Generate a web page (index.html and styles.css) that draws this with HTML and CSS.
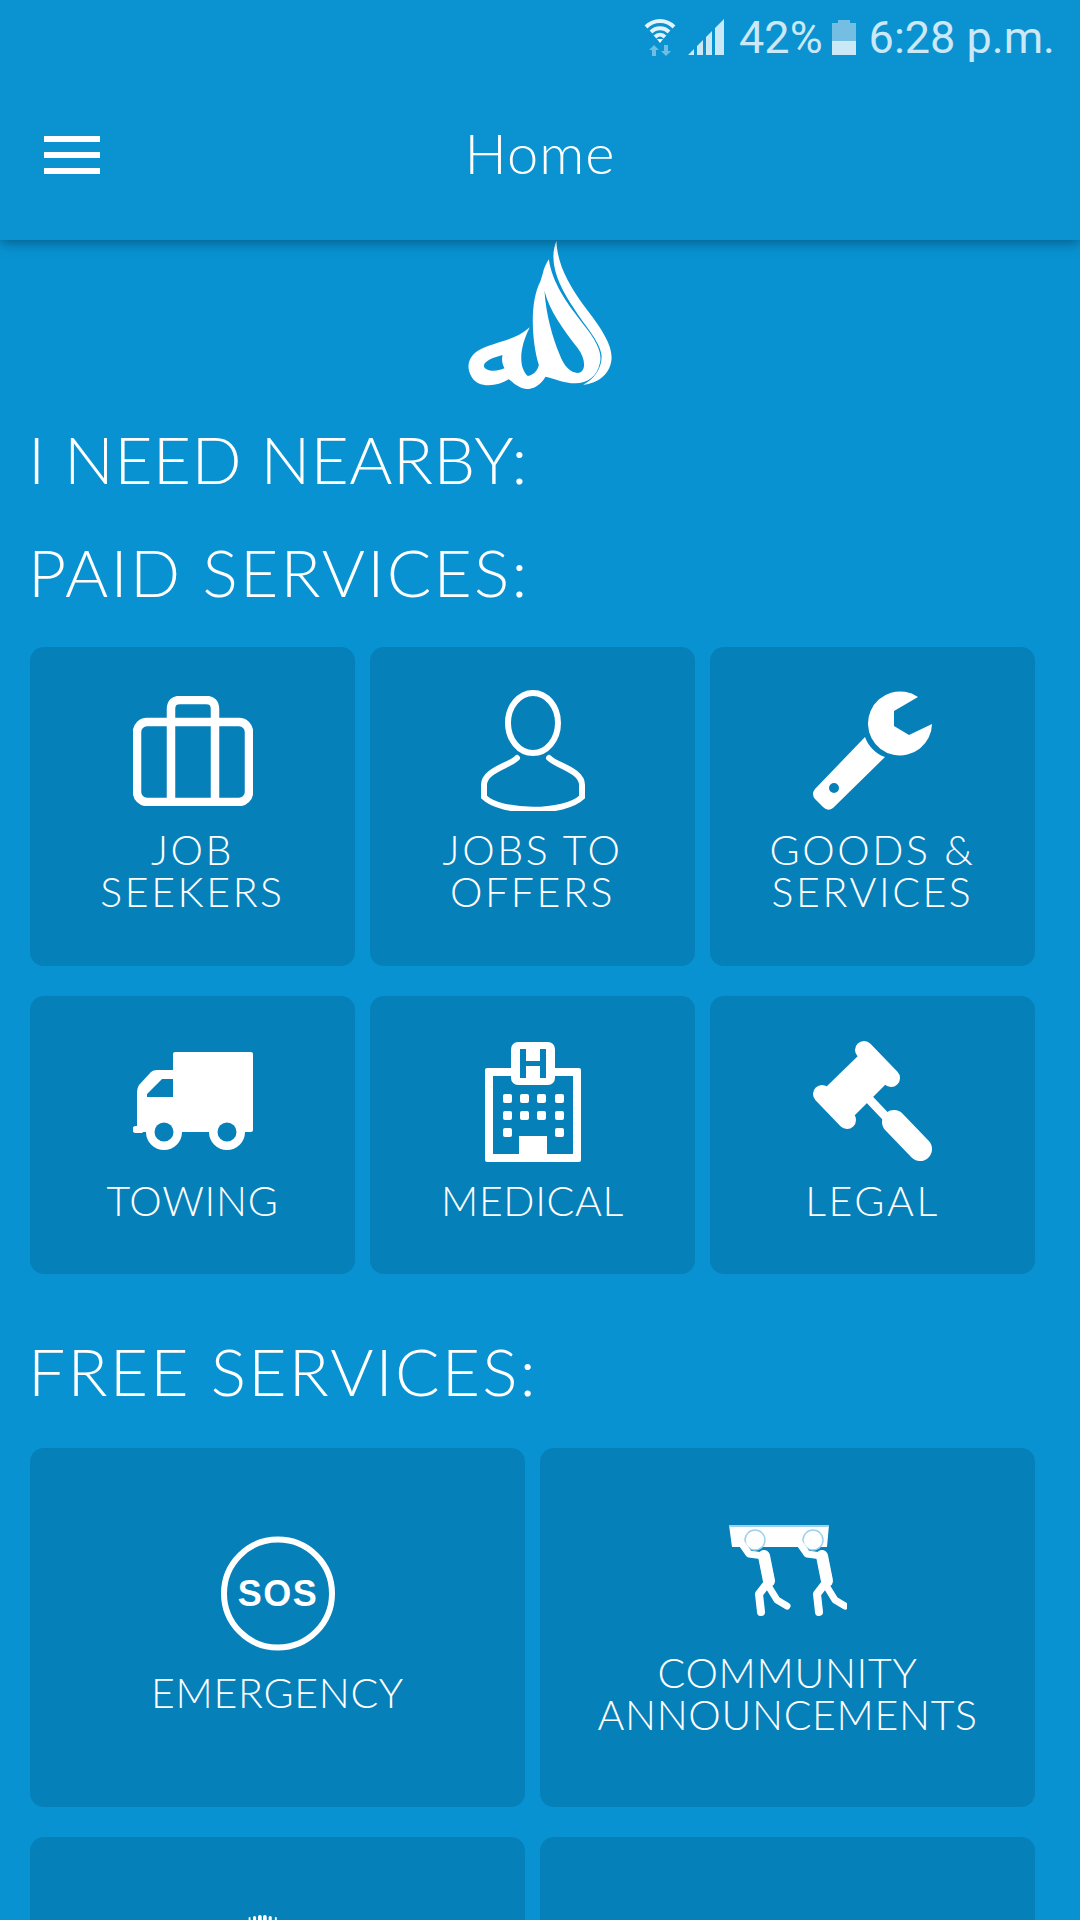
FILE: index.html
```html
<!DOCTYPE html>
<html>

<head>
    <meta charset="UTF-8">
    <title>Home</title>
    <meta name="viewport" content="width=device-width, initial-scale=1.0">
    <link rel="stylesheet" href="styles.css">
</head>

<body>
    <header class="app-bar">
        <div class="status-bar">
            <svg class="wifi-icon" width="32" height="37" viewBox="0 0 32 37">
                <path d="M2 8 C10 0 22 0 30 8" class="wifi-arc" />
                <path d="M7 13 C12 8 20 8 25 13" class="wifi-arc" />
                <path d="M11 18 C14 15 18 15 21 18" class="wifi-arc" />
                <path d="M13 20 L19 20 L16 24 Z" fill="#fff" />
                <path d="M8 37 V31 H5 L10 26 L15 31 H12 V37 Z M24 26 V32 H27 L22 37 L17 32 H20 V26 Z" class="wifi-data" />
            </svg>
            <svg class="signal-icon" width="36" height="36" viewBox="0 0 36 36">
                <path d="M0 36 L6 30 V36 Z M9 36 V27 L15 21 V36 Z M18 36 V18 L24 12 V36 Z M27 36 V9 L36 0 V36 Z" />
            </svg>
            <span class="battery-text">42%</span>
            <div class="battery-icon">
                <div class="battery-cap"></div>
                <div class="battery-body">
                    <div class="battery-level"></div>
                </div>
            </div>
            <span class="clock-text">6:28 p.m.</span>
        </div>
        <div class="title-row">
            <div class="menu-button">
                <span></span>
                <span></span>
                <span></span>
            </div>
            <h1>Home</h1>
        </div>
    </header>

    <div class="logo-row">
        <svg width="147" height="150" viewBox="200 60 440 450">
            <path d="M468 62 C470 130 500 190 560 270 C610 335 640 385 632 425 C625 465 590 490 548 494 C580 478 606 445 603 405 C598 365 555 320 520 265 C480 205 440 130 468 62 Z" fill="#fff" />
            <path fill="#fff" fill-rule="evenodd" d="M445 118 C455 190 500 250 550 315 C590 365 606 400 598 430 C590 470 560 490 525 490 C490 490 460 475 435 470 C420 495 400 507 378 507 C355 505 340 490 325 478 C285 503 230 503 213 470 C195 440 205 410 232 392 C280 365 340 365 388 322 C358 380 352 440 382 468 C400 465 412 450 415 435 C395 370 385 250 420 183 L427 160 C430 145 437 130 445 118 Z M432 212 C436 280 455 350 478 405 C492 445 520 465 540 457 C558 445 552 412 532 385 C490 330 445 270 432 212 Z M306 405 C280 412 252 422 250 437 C252 453 285 458 312 445 C305 432 303 420 306 405 Z" />
        </svg>
    </div>

    <main class="content">
        <h2 class="section-title first">I NEED NEARBY:</h2>

        <h2 class="section-title">PAID SERVICES:</h2>
        <div class="grid three">
            <a class="card row-one">
                <div class="card-icon">
                    <svg width="120" height="110" viewBox="0 0 120 110" class="line-icon" stroke-width="8.5">
                        <rect x="4" y="26" width="112" height="80" rx="10" />
                        <path d="M38 106 V13 Q38 4 47 4 H73 Q82 4 82 13 V106" />
                    </svg>
                </div>
                <span class="wide">JOB<br>SEEKERS</span>
            </a>
            <a class="card row-one">
                <div class="card-icon">
                    <svg width="104" height="121" viewBox="0 0 104 121" class="line-icon" stroke-width="6">
                        <ellipse cx="52" cy="33" rx="25" ry="30" />
                        <path d="M36 68 C28 76 3 80 3 95 V107 C20 124 84 124 101 107 V95 C101 80 76 76 68 68" stroke-linecap="round" />
                    </svg>
                </div>
                <span class="wide">JOBS TO<br>OFFERS</span>
            </a>
            <a class="card row-one">
                <div class="card-icon">
                    <svg width="121" height="121" viewBox="0 0 121 121" fill="#fff">
                        <path d="M106 7 A32 32 0 1 0 120 34 L97 45 L82 36 V21 Z" />
                        <path fill-rule="evenodd" d="M53 47 C56 56 64 64 73 67 L21 118 Q16 122 11 117 L3 109 Q-1 104 3 99 Z M22 93 A5 5 0 1 0 22 103 A5 5 0 1 0 22 93 Z" />
                    </svg>
                </div>
                <span class="wide">GOODS &amp;<br>SERVICES</span>
            </a>
            <a class="card row-two">
                <div class="card-icon">
                    <svg width="120" height="100" viewBox="0 0 120 100" fill="#fff">
                        <path fill-rule="evenodd" d="M42 0 H118 Q120 0 120 2 V78 Q120 80 118 80 H4 V40 Q4 36 6 33 L18 20 Q20 18 24 18 H40 V2 Q40 0 42 0 Z M14 45 H40 V27 H29 L14 42 Z" />
                        <path d="M4 74 H3 A3.5 3.5 0 0 0 3 81 H10 Z" />
                        <circle cx="31" cy="80" r="18" />
                        <circle cx="94" cy="80" r="18" />
                        <circle cx="31" cy="80" r="9.5" class="card-fill" />
                        <circle cx="94" cy="80" r="9.5" class="card-fill" />
                    </svg>
                </div>
                <span>TOWING</span>
            </a>
            <a class="card row-two">
                <div class="card-icon">
                    <svg width="96" height="120" viewBox="0 0 96 120" fill="#fff">
                        <path fill-rule="evenodd" d="M2 26 H94 Q96 26 96 28 V118 Q96 120 94 120 H2 Q0 120 0 118 V28 Q0 26 2 26 Z M8 34 V112 H34 V94 H62 V112 H88 V34 Z" />
                        <rect x="26" y="0" width="44" height="43" rx="7" />
                        <path d="M35 7 H41 V19 H55 V7 H61 V36 H55 V24 H41 V36 H35 Z" class="card-fill" />
                        <rect x="18" y="52" width="9" height="9" rx="2" />
                        <rect x="35" y="52" width="9" height="9" rx="2" />
                        <rect x="52" y="52" width="9" height="9" rx="2" />
                        <rect x="70" y="52" width="9" height="9" rx="2" />
                        <rect x="18" y="69" width="9" height="9" rx="2" />
                        <rect x="35" y="69" width="9" height="9" rx="2" />
                        <rect x="52" y="69" width="9" height="9" rx="2" />
                        <rect x="70" y="69" width="9" height="9" rx="2" />
                        <rect x="18" y="86" width="9" height="9" rx="2" />
                        <rect x="70" y="86" width="9" height="9" rx="2" />
                    </svg>
                </div>
                <span>MEDICAL</span>
            </a>
            <a class="card row-two">
                <div class="card-icon">
                    <svg width="121" height="121" viewBox="0 0 121 121" fill="#fff" stroke="#fff" stroke-linecap="round">
                        <path d="M49 12 L77 40 L41 76 L13 47 Z" stroke="none" />
                        <path d="M52 9 L79 37" stroke-width="18" />
                        <path d="M10 53 L35 79" stroke-width="18" />
                        <path d="M58 59 L77 79" stroke-width="9" />
                        <path d="M82 81 L108 108" stroke-width="24" />
                    </svg>
                </div>
                <span class="wide">LEGAL</span>
            </a>
        </div>

        <h2 class="section-title free">FREE SERVICES:</h2>
        <div class="grid two">
            <a class="card row-free sos-card">
                <div class="card-icon">
                    <svg width="114" height="115" viewBox="0 0 114 115">
                        <circle cx="57" cy="57.5" r="54" fill="none" stroke="#fff" stroke-width="6" />
                        <text x="57" y="70" text-anchor="middle" class="sos-text">SOS</text>
                    </svg>
                </div>
                <span>EMERGENCY</span>
            </a>
            <a class="card row-free carry-card">
                <div class="card-icon">
                    <svg width="118" height="92" viewBox="0 0 118 92">
                        <path d="M0 1 H100 L98 23 H3 Z" fill="#fff" />
                        <path d="M0 2 H100" stroke="#9fd2ea" stroke-width="2" />
                        <g id="carrier" class="carrier">
                            <circle cx="26" cy="16" r="10" fill="#fff" stroke="#9fd2ea" stroke-width="1.5" />
                            <path d="M35 32 L40 57" stroke-width="12" />
                            <path d="M13 20 L20 30 L35 32" stroke-width="7" />
                            <path d="M40 57 L30 70 L32 88" stroke-width="8" />
                            <path d="M40 63 L48 76 L58 82" stroke-width="7" />
                        </g>
                        <use href="#carrier" x="58" />
                    </svg>
                </div>
                <span>COMMUNITY<br>ANNOUNCEMENTS</span>
            </a>
            <a class="card row-clip">
                <svg class="dots-icon" width="50" height="8" viewBox="0 0 50 8" fill="#fff">
                    <rect x="2" y="3" width="3" height="10" rx="1.5" />
                    <rect x="9" y="1.5" width="5" height="10" rx="2.5" />
                    <rect x="17" y="0" width="6" height="10" rx="3" />
                    <rect x="25" y="0" width="6" height="10" rx="3" />
                    <rect x="34" y="1.5" width="5" height="10" rx="2.5" />
                    <rect x="44" y="3" width="3" height="10" rx="1.5" />
                </svg>
            </a>
            <a class="card row-clip"></a>
        </div>
    </main>
</body>

</html>
```
FILE: styles.css
```css
html,
body {
    margin: 0;
    height: 1920px;
    overflow: hidden;
}

body {
    background: #0892d2;
    color: #fff;
    font-family: Lato, sans-serif;
    font-weight: 300;
}

.app-bar {
    height: 240px;
    background: #0a92d1;
    box-shadow: 0 3px 12px rgba(0, 0, 0, 0.35);
    position: relative;
}

.status-bar {
    height: 74px;
    padding-right: 25px;
    display: flex;
    justify-content: flex-end;
    align-items: center;
    font-family: Roboto, sans-serif;
    font-weight: 400;
    font-size: 45px;
    color: #cbe8f6;
}

.wifi-icon {
    margin-right: 12px;
}

.wifi-arc {
    fill: none;
    stroke: #e3f3fb;
    stroke-width: 4;
}

.wifi-data {
    fill: #70bde2;
}

.signal-icon {
    fill: #cbe8f6;
    margin-right: 15px;
}

.battery-text {
    margin-right: 9px;
}

.battery-icon {
    width: 24px;
    margin-right: 13px;
}

.battery-cap {
    width: 12px;
    height: 3px;
    margin: 0 auto;
    background: #74bee3;
}

.battery-body {
    height: 32px;
    background: #74bee3;
    display: flex;
    align-items: flex-end;
}

.battery-level {
    width: 100%;
    height: 14px;
    background: #cbe8f6;
}

.title-row {
    height: 156px;
    display: flex;
    align-items: center;
    justify-content: center;
    position: relative;
}

.title-row h1 {
    margin: 0;
    font-size: 56px;
    font-weight: 300;
    letter-spacing: 1px;
}

.menu-button {
    position: absolute;
    left: 44px;
    top: 62px;
    width: 56px;
    display: flex;
    flex-direction: column;
    gap: 10px;
}

.menu-button span {
    height: 6px;
    background: #fff;
}

.logo-row {
    height: 150px;
    display: flex;
    justify-content: center;
}

.content {
    padding: 0 45px 0 30px;
}

.section-title {
    margin: 0 0 45px -2px;
    font-size: 66px;
    line-height: 60px;
    font-weight: 300;
    letter-spacing: 2.2px;
}

.section-title.first {
    margin-top: 39px;
    margin-bottom: 53px;
    letter-spacing: 0.4px;
}

.section-title.free {
    margin-top: 67px;
    margin-bottom: 47px;
}

.grid {
    display: grid;
    column-gap: 15px;
    row-gap: 30px;
}

.grid.three {
    grid-template-columns: repeat(3, 1fr);
}

.grid.two {
    grid-template-columns: repeat(2, 1fr);
}

.card {
    background: #0680b9;
    border-radius: 14px;
    box-sizing: border-box;
    display: flex;
    flex-direction: column;
    align-items: center;
    text-align: center;
    font-size: 41px;
    line-height: 42px;
    letter-spacing: 0.7px;
}

.card .wide {
    letter-spacing: 2.6px;
}

.card-icon {
    height: 121px;
    margin-bottom: 18px;
    display: flex;
    align-items: center;
}

.row-one {
    height: 319px;
    padding-top: 43px;
}

.row-two {
    height: 278px;
    padding-top: 45px;
}

.row-free {
    height: 359px;
}

.sos-card {
    padding-top: 85px;
}

.carry-card {
    padding-top: 61px;
}

.carry-card .card-icon {
    margin-bottom: 22px;
}

.row-clip {
    height: 83px;
    border-radius: 14px 14px 0 0;
    padding-top: 78px;
    overflow: hidden;
}

.dots-icon {
    margin-right: 30px;
}

.line-icon {
    fill: none;
    stroke: #fff;
}

.card-fill {
    fill: #0680b9;
}

.sos-text {
    font-family: "Liberation Sans", sans-serif;
    font-weight: 700;
    font-size: 36px;
    letter-spacing: 1.5px;
    fill: #fff;
}

.carrier {
    fill: none;
    stroke: #fff;
    stroke-linecap: round;
    stroke-linejoin: round;
}
```
